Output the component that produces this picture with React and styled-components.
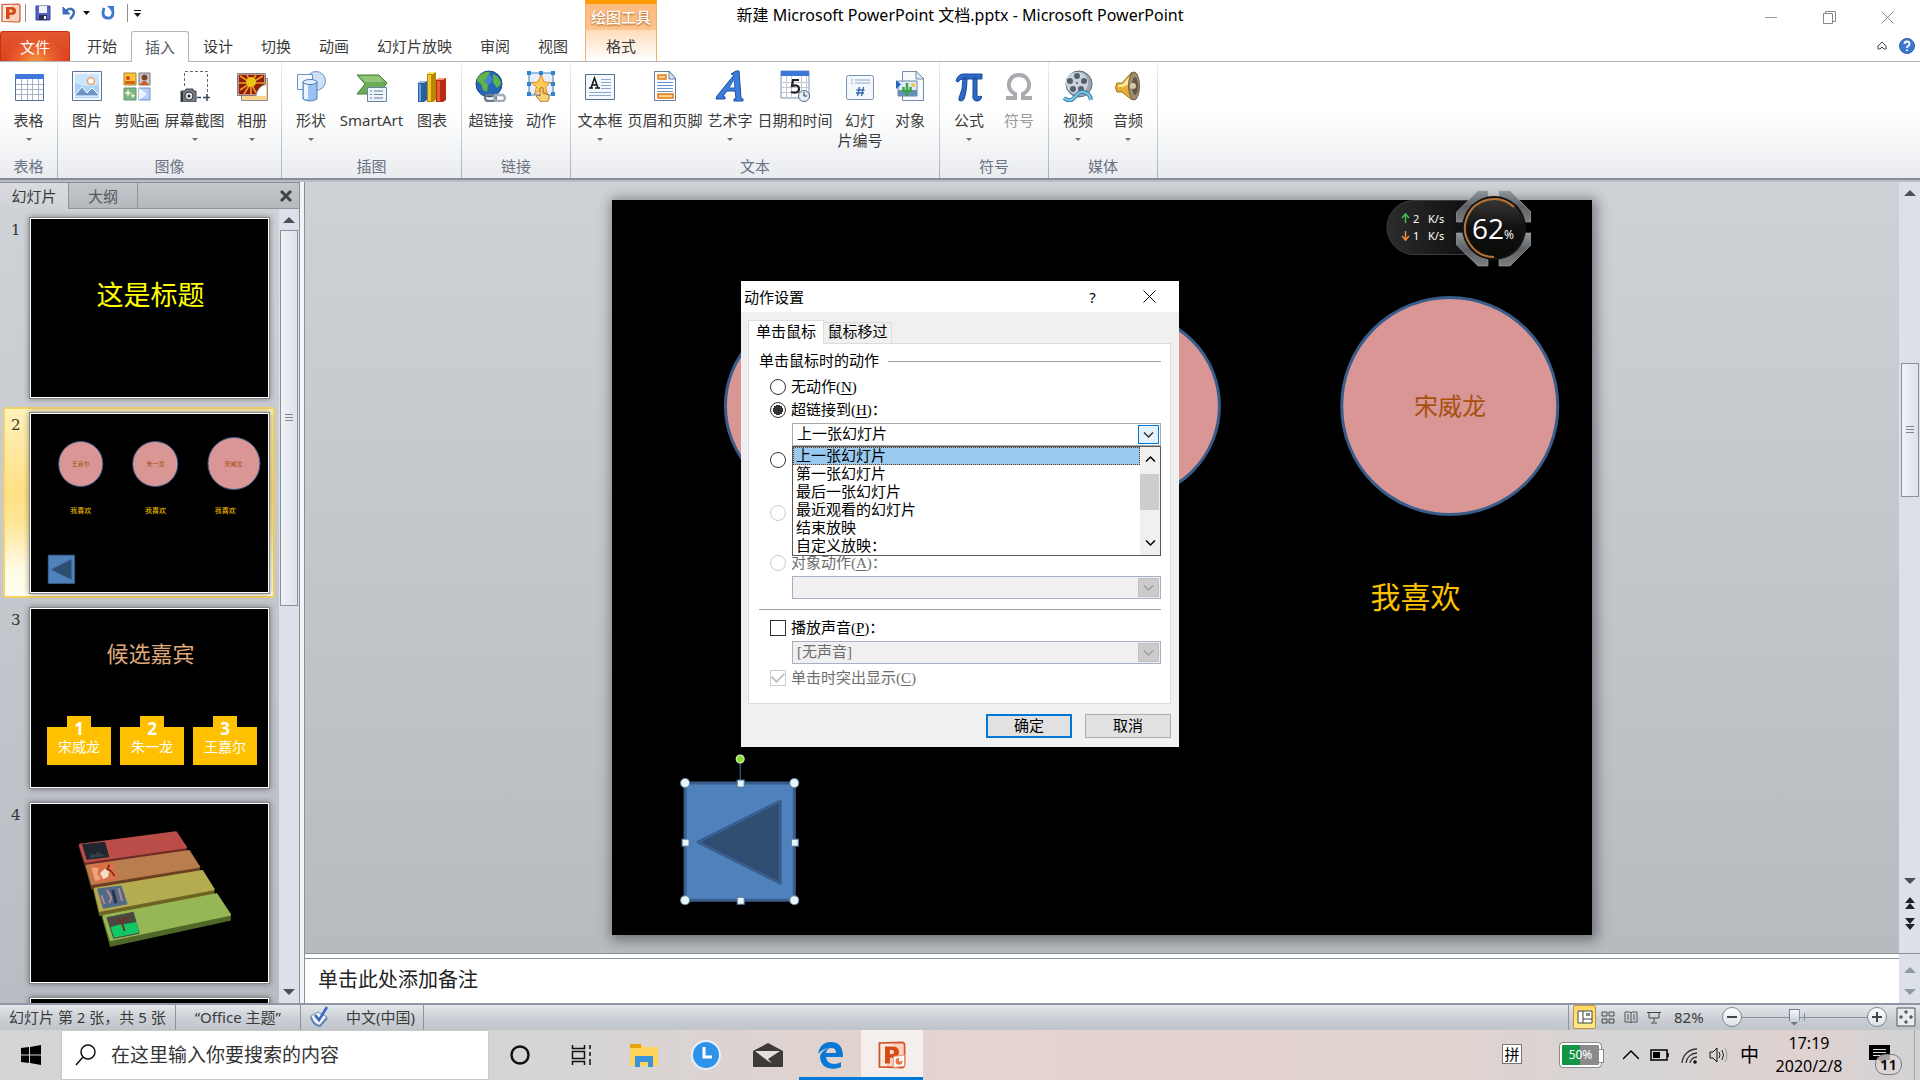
import React from 'react'
import styled, { createGlobalStyle, css } from 'styled-components'

const uiFont = '"Noto Sans", "Noto Sans CJK SC", sans-serif'
const songFont = '"Liberation Serif", "Noto Sans CJK SC", serif'

const GlobalStyle = createGlobalStyle`
  * { box-sizing: border-box; }
  body {
    margin: 0;
    overflow: hidden;
    background: #fff;
    color: #3b3b3b;
    font: 15px/20px ${uiFont};
  }
  button, input, select {
    margin: 0;
    padding: 0;
    border: 0;
    background: none;
    color: inherit;
    font: inherit;
  }
  svg { display: block; flex: none; }
`

const Window = styled.div`
  display: flex;
  flex-direction: column;
  height: 100vh;
`

/* ---------- title bar ---------- */

const TitleBar = styled.header`
  display: grid;
  grid-template-columns: 1fr auto 1fr;
  height: 31px;
  flex: none;
`
const QuickAccess = styled.div`
  display: flex;
  align-items: center;
  height: 26px;
  padding-left: 1px;
  button { display: flex; }
`
const QuickSep = styled.span`
  width: 1px;
  height: 18px;
  background: #8f8f8f;
  margin: 0 ${p => p.$gap}px 0 4px;
`
const DocTitle = styled.h1`
  margin: 0;
  padding-top: 5px;
  font-size: 16px;
  line-height: 20px;
  font-weight: 400;
  color: #000;
`
const WindowButtons = styled.div`
  display: flex;
  justify-content: flex-end;
  padding-right: 4px;
  button {
    width: 58px;
    height: 34px;
    display: grid;
    place-items: center;
  }
`

/* ---------- ribbon ---------- */

const TabRow = styled.nav`
  display: flex;
  align-items: flex-end;
  height: 31px;
  flex: none;
  border-bottom: 1px solid #b2b5ba;
`
const FileTab = styled.button`
  width: 70px;
  height: 30px;
  margin-right: 3px;
  border: 1px solid #c5330f;
  border-bottom: 0;
  border-radius: 3px 3px 0 0;
  background: radial-gradient(ellipse at 50% 120%, #fbab45 0, rgba(240, 110, 50, 0.8) 35%, transparent 65%), linear-gradient(#e2572f, #dc4220);
  color: #fff;
`
const Tab = styled.button`
  height: 30px;
  padding: 0 14px;
  ${p => p.$active && css`
    height: 31px;
    margin-bottom: -1px;
    padding: 0 13px;
    border: 1px solid #b2b5ba;
    border-bottom: 0;
    border-radius: 3px 3px 0 0;
    background: #fff;
    color: #505b68;
  `}
`
const ContextTab = styled.div`
  display: flex;
  flex-direction: column;
  width: 72px;
  height: 61px;
  margin-left: 3px;
  border-top: 4px solid #ff9c00;
  border-left: 1px solid #f0b070;
  border-right: 1px solid #f0b070;
  background: linear-gradient(#fdba7c 0, #fdc48e 26px, #fedcb9 26px, #fff 56px);
  text-align: center;
  span {
    padding-top: 3px;
    height: 26px;
    color: #fff;
    font-weight: 500;
    text-shadow: 0 1px 2px #a85a18;
  }
  button { height: 31px; }
`
const TabRowEnd = styled.div`
  display: flex;
  align-items: center;
  gap: 12px;
  height: 30px;
  margin-left: auto;
  padding-right: 5px;
  button { display: flex; }
`
const Ribbon = styled.div`
  display: flex;
  flex: none;
  height: 118px;
  border-bottom: 2px solid #868c95;
  background: linear-gradient(#fff 0, #fff 44%, #f7f8f9 65%, #e9ebef 100%);
`
const Group = styled.section`
  display: flex;
  flex-direction: column;
  padding: 8px 4px 0;
  border-right: 1px solid;
  border-image: linear-gradient(#eceef0, #aeb2b8) 1;
`
const GroupItems = styled.div`
  display: flex;
  height: 86px;
`
const GroupLabel = styled.h2`
  margin: 0;
  text-align: center;
  font-size: 15px;
  line-height: 20px;
  font-weight: 400;
  color: #6a7283;
`
const BigButton = styled.button`
  display: flex;
  flex-direction: column;
  align-items: center;
  width: ${p => p.$w || 50}px;
  color: ${p => (p.disabled ? '#9a9a9a' : '#3b3b3b')};
  line-height: 20px;
  svg { margin-bottom: 8px; }
  span { white-space: nowrap; }
`
const Caret = styled.i`
  margin-top: 8px;
  border: 3px solid transparent;
  border-top-color: #707070;
  border-bottom: 0;
`

/* ---------- workspace ---------- */

const Workspace = styled.main`
  display: flex;
  flex: 1;
  min-height: 0;
  border-top: 2px solid #b9bdc4;
`
const SidePane = styled.aside`
  display: flex;
  flex-direction: column;
  width: 300px;
  flex: none;
  background: linear-gradient(#cfd2d7, #b9bcc2);
  border-right: 1px solid #8a9099;
`
const PaneTabs = styled.div`
  display: flex;
  height: 27px;
  flex: none;
  border-top: 1px solid #8a9099;
  border-bottom: 1px solid #8f959c;
  background: linear-gradient(#c3c7cb, #b5b9bd);
  button:last-child {
    display: grid;
    place-items: center;
    width: 26px;
    margin-left: auto;
  }
`
const PaneTab = styled.button`
  width: 69px;
  border-right: 1px solid #8f959c;
  color: ${p => (p.$active ? '#3b3b3b' : '#55585c')};
  ${p => p.$active && css`
    height: 26px;
    background: linear-gradient(#d9dbdf, #cfd2d7);
  `}
`
const PaneBody = styled.div`
  display: flex;
  flex: 1;
  min-height: 0;
`
const ThumbList = styled.ol`
  flex: 1;
  margin: 0;
  padding: 3px 4px 0 3px;
  list-style: none;
  overflow: hidden;
`
const ThumbItem = styled.li`
  display: flex;
  height: 191px;
  margin-bottom: 4px;
  padding: 5px 0 0 7px;
  border: 1px solid transparent;
  border-radius: 3px;
  font: 15px/20px "DejaVu Serif", serif;
  color: #333;
  > span { width: 11px; padding-top: 2px; }
  ${p => p.$selected && css`
    border: 2px solid #f4d264;
    padding: 4px 0 0 6px;
    background: linear-gradient(#fff1bb, #ffe085 45%, #ffe596 60%, #fffbe3 85%, #fffdf0);
  `}
`
const ThumbFrame = styled.div`
  position: relative;
  width: 239px;
  height: 180px;
  margin-left: 8px;
  border: 1px solid #fff;
  outline: 1px solid #85888d;
  background: #000;
  box-shadow: 0 0 6px 1px rgba(0, 0, 0, 0.4);
  overflow: hidden;
`
const ScrollTrack = styled.div`
  display: flex;
  flex-direction: column;
  align-items: center;
  width: ${p => p.$w || 20}px;
  flex: none;
  padding: ${p => p.$pad || '8px 0'};
  background: #dce0e9;
`
const Arrow = styled.i`
  flex: none;
  border: 6px solid transparent;
  ${p => (p.$down
    ? css`border-top-color: ${p.$tone || '#4c4f54'}; border-bottom: 0;`
    : css`border-bottom-color: ${p.$tone || '#4c4f54'}; border-top: 0;`)}
`
const ScrollGap = styled.div`
  flex: 1;
`
const ScrollThumb = styled.div`
  display: grid;
  place-items: center;
  width: 18px;
  height: ${p => p.$h};
  margin-top: ${p => p.$top};
  margin-bottom: auto;
  border: 1px solid #8a919c;
  background: linear-gradient(90deg, #f0f2f6, #dde1e9);
  &::after {
    content: '';
    width: 8px;
    height: 8px;
    background: repeating-linear-gradient(#7f8590 0 1px, transparent 1px 3px);
  }
`
const Splitter = styled.div`
  width: 5px;
  flex: none;
  background: #f3f4f6;
  border-right: 1px solid #8a9099;
`
const Stage = styled.div`
  display: flex;
  flex-direction: column;
  flex: 1;
  min-width: 0;
`
const EditArea = styled.div`
  display: flex;
  flex: 1;
  min-height: 0;
`
const Canvas = styled.div`
  flex: 1;
  display: flex;
  justify-content: center;
  padding: 18px 0;
  background: linear-gradient(#ced1d6, #b7bbc0);
`
const Slide = styled.div`
  position: relative;
  height: 100%;
  aspect-ratio: 4 / 3;
  background: #000;
  box-shadow: 2px 2px 12px 3px rgba(0, 0, 0, 0.4);
`
const NotesRow = styled.div`
  display: flex;
  height: 50px;
  flex: none;
  border-top: 1px solid #8a9099;
  background: #fff;
`
const Notes = styled.p`
  flex: 1;
  margin: 4px 0 0;
  padding: 9px 13px;
  border-top: 1px solid #8a9099;
  color: #222;
  font: 20px/24px ${songFont};
`

/* ---------- slide contents ---------- */

const Person = styled.div`
  position: absolute;
  left: ${p => p.$x}%;
  top: 28%;
  width: ${p => p.$w}%;
  aspect-ratio: 1;
  transform: translate(-50%, 0);
  margin-top: ${p => -p.$w / 2}%;
  display: grid;
  place-items: center;
  border: ${p => (p.$small ? 1 : 3)}px solid #385d8a;
  border-radius: 50%;
  background: #d99694;
  color: #a5500f;
  font: ${p => (p.$small ? 6 : 24)}px/1 ${uiFont};
`
const Liking = styled.div`
  position: absolute;
  left: ${p => p.$x}%;
  top: 54%;
  transform: translate(-50%, -50%);
  color: #ffc000;
  font: ${p => (p.$small ? 7 : 30)}px/1 ${uiFont};
  white-space: nowrap;
`
const BackShape = styled.svg`
  position: absolute;
  left: 6.5%;
  top: 77.6%;
  width: 13%;
  height: 19.5%;
  overflow: visible;
`
const ThumbHeading = styled.div`
  position: absolute;
  left: 2px;
  right: 0;
  top: ${p => p.$top}px;
  text-align: center;
  color: ${p => p.$tone};
  font: ${p => p.$size}px/30px ${uiFont};
`
const Nominee = styled.div`
  position: absolute;
  top: 107px;
  left: ${p => p.$x}px;
  width: 64px;
  height: 49px;
  background: linear-gradient(#ffc000, #ffc000) 50% 0 / 24px 11px no-repeat, linear-gradient(#ffc000, #ffc000) 0 11px / 64px 38px no-repeat;
  text-align: center;
  color: #fff;
  b { display: block; padding-top: 4px; font: 700 17px/18px "Open Sans", sans-serif; }
  span { display: block; font: 14px/18px ${uiFont}; }
`

/* ---------- network gadget ---------- */

const Gadget = styled.div`
  position: absolute;
  right: 389px;
  top: 190px;
  width: 145px;
  height: 77px;
  color: #fff;
`
const Rates = styled.div`
  position: absolute;
  left: 14px;
  top: 20px;
  display: grid;
  grid-template-columns: 13px 15px 20px;
  align-items: center;
  font: 11px/17px ${uiFont};
  white-space: nowrap;
`
const Percent = styled.div`
  position: absolute;
  left: 86px;
  top: 22px;
  font: 28px/32px "Open Sans", sans-serif;
  small { font-size: 12px; }
`

/* ---------- dialog ---------- */

const Dialog = styled.form`
  position: absolute;
  left: calc(50% - 219px);
  top: 281px;
  width: 438px;
  background: #f0f0f0;
  color: #000;
  font: 15px/18px ${songFont};
`
const DialogTitle = styled.div`
  display: flex;
  align-items: center;
  height: 31px;
  padding-left: 3px;
  background: #fff;
  font-family: ${uiFont};
  b { flex: 1; font-weight: 400; }
  button { width: 57px; display: grid; place-items: center; }
  button:last-child { margin-right: 1px; }
`
const DialogTabs = styled.div`
  display: flex;
  align-items: flex-end;
  height: 31px;
  padding: 0 7px;
`
const DialogTab = styled.button`
  position: relative;
  z-index: 1;
  height: ${p => (p.$active ? 24 : 21)}px;
  width: ${p => (p.$active ? 76 : 68)}px;
  margin-bottom: ${p => (p.$active ? -1 : 0)}px;
  padding-bottom: 2px;
  border: 1px solid #dcdcdc;
  border-bottom: 0;
  border-left-width: ${p => (p.$active ? 1 : 0)}px;
  background: ${p => (p.$active ? '#fff' : '#f0f0f0')};
`
const DialogPanel = styled.div`
  margin: 0 8px 0 7px;
  height: 361px;
  padding: 8px 9px 0 10px;
  border: 1px solid #dcdcdc;
  background: #fff;
`
const Legend = styled.div`
  display: flex;
  align-items: center;
  gap: 9px;
  height: 18px;
  margin-bottom: 5px;
  &::after { content: ''; flex: 1; height: 1px; background: #a0a0a0; }
`
const Option = styled.label`
  display: flex;
  align-items: center;
  gap: 5px;
  height: 23px;
  padding-left: 11px;
  color: ${p => (p.$off ? '#6d6d6d' : '#000')};
  u { text-underline-offset: 2px; }
`
const Radio = styled.input.attrs({ type: 'radio' })`
  appearance: none;
  width: 16px;
  height: 16px;
  border: 1px solid #333;
  border-radius: 50%;
  background: #fff;
  &:checked { background: radial-gradient(circle, #333 0 5px, #fff 5px); }
  &:disabled { border-color: #ccc; }
`
const Check = styled.input.attrs({ type: 'checkbox' })`
  appearance: none;
  display: grid;
  place-items: center;
  width: 16px;
  height: 16px;
  border: 1px solid #333;
  background: #fff;
  &:disabled { border-color: #ccc; }
  &:checked::after {
    content: '';
    width: 10px;
    height: 6px;
    margin-top: -3px;
    border: solid #c2c2c2;
    border-width: 0 0 2px 2px;
    rotate: -45deg;
  }
`
const Combo = styled.div`
  position: relative;
  display: flex;
  height: 23px;
  margin: 2px 0 ${p => p.$after || 2}px 33px;
  padding: 1px;
  border: 1px solid ${p => (p.$off ? '#a3b1c2' : '#a9a9a9')};
  background: ${p => (p.$off ? '#f0f0f0' : '#fff')};
  color: ${p => (p.$off ? '#6d6d6d' : '#000')};
  select {
    appearance: none;
    flex: 1;
    padding: 0 3px 1px;
    opacity: 1;
    outline: 0;
  }
  > span {
    display: grid;
    place-items: center;
    width: 21px;
    border: 1px solid ${p => (p.$off ? '#bfbfbf' : '#0078d7')};
    background: ${p => (p.$off ? '#ccc' : '#e5f1fb')};
    color: ${p => (p.$off ? '#9f9f9f' : '#333')};
  }
`
const DropList = styled.div`
  position: absolute;
  z-index: 2;
  left: -1px;
  right: -1px;
  top: 22px;
  display: flex;
  height: 110px;
  border: 1px solid #5a5a5a;
  background: #fff;
  ul { flex: 1; margin: 0; padding: 0; list-style: none; }
`
const DropItem = styled.li`
  height: 18px;
  padding-left: 3px;
  line-height: 18px;
  ${p => p.$selected && css`
    background: #99c9ef;
    outline: 1px dotted #6b3610;
    outline-offset: -1px;
  `}
`
const DropScroll = styled.div`
  display: flex;
  flex-direction: column;
  align-items: center;
  justify-content: space-between;
  width: 20px;
  padding: 8px 0;
  background: linear-gradient(#cdcdcd, #cdcdcd) 0 27px / 19px 36px no-repeat, #f0f0f0;
`
const Rule = styled.hr`
  height: 1px;
  margin: 10px 0 6px;
  border: 0;
  background: #a0a0a0;
`
const DialogFooter = styled.div`
  display: flex;
  justify-content: flex-end;
  gap: 13px;
  padding: 10px 8px 9px;
  button {
    width: 86px;
    height: 24px;
    border: 1px solid #adadad;
    background: #e1e1e1;
  }
  button:first-child { border: 2px solid #0078d7; }
`

/* ---------- status bar ---------- */

const StatusBar = styled.footer`
  display: flex;
  align-items: center;
  height: 27px;
  flex: none;
  border-top: 2px solid #8f97a5;
  background: linear-gradient(#e3e6ea, #cdd1d7 50%, #bfc4ca);
`
const StatusItem = styled.span`
  display: flex;
  align-items: center;
  gap: ${p => p.$gap || 0}px;
  height: 25px;
  padding: 0 ${p => p.$px}px 2px;
  border-right: 1px solid #8e949c;
  white-space: nowrap;
`
const ViewTools = styled.div`
  display: flex;
  align-items: center;
  margin-left: auto;
  padding: 0 3px 1px 4px;
  border-left: 1px solid #8e949c;
`
const ViewButton = styled.button`
  display: grid;
  place-items: center;
  width: 23px;
  height: 24px;
  ${p => p.$active && css`
    border: 1px solid #c2923a;
    border-radius: 2px;
    background: linear-gradient(#ffd965, #ffe98f);
  `}
`
const FitButton = styled(ViewButton)`
  margin-left: 7px;
`
const Zoom = styled.div`
  display: flex;
  align-items: center;
  margin-left: 9px;
  label { width: 48px; }
  input {
    appearance: none;
    width: 125px;
    height: 20px;
    background: linear-gradient(#8691a0, #8691a0) 0 50% / 100% 1px no-repeat, linear-gradient(#8691a0, #8691a0) 50% 50% / 1px 8px no-repeat;
  }
  input::-webkit-slider-thumb {
    appearance: none;
    width: 11px;
    height: 17px;
    clip-path: polygon(0 0, 100% 0, 100% 70%, 50% 100%, 0 70%);
    background: linear-gradient(#f6f7f9, #c8ced6) 1px 1px / 9px 12px no-repeat #727d8c;
  }
`
const RoundButton = styled.button`
  display: grid;
  place-items: center;
  width: 20px;
  height: 20px;
  border: 1px solid #7d8694;
  border-radius: 50%;
  background: linear-gradient(#fff, #dce0e6);
`

/* ---------- taskbar ---------- */

const Taskbar = styled.div`
  display: flex;
  flex: none;
  height: 50px;
  background: linear-gradient(90deg, #d3d4d6 0, #d6d5d5 30%, #e0d3cf 43%, #e5d4d1 50%, #e1d3d0 75%, #d5d5d5 85%, #dfd2d0 94%, #d2d2d4 100%);
  color: #000;
`
const TaskButton = styled.button`
  display: grid;
  place-items: center;
  width: ${p => p.$w || 62}px;
  padding-top: 3px;
  border-bottom: 3px solid ${p => (p.$open ? '#0078d7' : 'transparent')};
  background: ${p => (p.$front ? '#f4eeec' : 'none')};
`
const SearchBox = styled.label`
  display: flex;
  align-items: center;
  width: 428px;
  padding-left: 13px;
  gap: 14px;
  border: 1px solid #c9c9c9;
  background: #fff;
  input { flex: 1; min-width: 0; font-size: 19px; outline: 0; }
  input::placeholder { color: #333; opacity: 1; }
`
const Tray = styled.div`
  display: flex;
  align-items: center;
  margin-left: auto;
  padding-right: 5px;
`
const Pinyin = styled.span`
  display: grid;
  place-items: center;
  width: 20px;
  height: 20px;
  margin: 0 38px 3px 0;
  border: 1px solid #777;
  background: #fff;
  font-size: 15px;
  line-height: 18px;
`
const Battery = styled.span`
  position: relative;
  width: 41px;
  height: 24px;
  margin-right: 22px;
  border: 2px solid #fff;
  outline: 1px solid #8b8b8b;
  border-radius: 3px;
  background: linear-gradient(90deg, #149544 50%, #8b8b8b 50%);
  color: #fff;
  text-align: center;
  font-size: 12px;
  line-height: 19px;
  &::after {
    content: '';
    position: absolute;
    right: -5px;
    top: 4px;
    width: 4px;
    height: 12px;
    border: 1px solid #8b8b8b;
    border-left: 0;
    background: #fff;
  }
`
const TrayIcons = styled.div`
  display: flex;
  align-items: center;
  gap: 11px;
  span { font-size: 19px; line-height: 24px; }
`
const Clock = styled.time`
  width: 76px;
  margin: 0 22px 0 12px;
  text-align: center;
  font-size: 16px;
  line-height: 23px;
  white-space: nowrap;
`
const ActionCenter = styled.button`
  position: relative;
  display: flex;
  width: 46px;
  height: 50px;
  padding-top: 15px;
  border-right: 1px solid #a9a9a9;
  span {
    position: absolute;
    left: 6px;
    top: 24px;
    width: 27px;
    height: 21px;
    border: 1px solid #777;
    border-radius: 10px;
    background: rgba(220, 215, 214, 0.75);
    font-weight: 600;
    line-height: 19px;
  }
`

/* ---------- icons ---------- */

const Icon = ({ size = 32, w, children }) => (
  <svg width={w || size} height={size} viewBox={`0 0 ${w || size} ${size}`} fill="none" aria-hidden="true">
    {children}
  </svg>
)

const icons = {
  table: (
    <Icon>
      <path d="M2.500 4.500h28v26h-28z" fill="#fff" stroke="#54719e" />
      <path d="M2 4h29v5H2z" fill="#3f78dc" />
      <path d="M3 14.500h27M3 19.500h27M3 24.500h27M8.500 9v21M14.500 9v21M19.500 9v21M25.500 9v21" stroke="#a3b2c8" />
    </Icon>
  ),
  picture: (
    <Icon>
      <path d="M1.500 1.500h29v29h-29z" fill="#f4f8fd" stroke="#5a7696" />
      <path d="M4 4h24v24H4z" fill="#a8d3f6" />
      <path d="M4 4h24v10Q14 20 4 12z" fill="#cbe6fb" />
      <circle cx="20" cy="11" r="3.500" fill="#fff" stroke="#efa26b" strokeWidth="1.500" />
      <path d="M4 25l7-8 5 6 5-5 7 7v1H4z" fill="#6d93c2" stroke="#fff" />
    </Icon>
  ),
  clipart: (
    <Icon>
      <path d="M3 3h12v12H3z" fill="#fbc53a" stroke="#a8832d" /><path d="M4 11h10v3H4z" fill="#d8602a" /><circle cx="7" cy="8" r="2" fill="#e33d16" />
      <path d="M18 3h11v12H18z" fill="#c6cad0" stroke="#777" /><circle cx="23.500" cy="7.500" r="3" fill="#7d4629" /><path d="M19 15q4-8 9 0z" fill="#d25c1e" />
      <path d="M3 18h12v12H3z" fill="#7db58b" stroke="#5f9770" /><path d="M7 19l1 3 3 1-3 1-1 3-1-3-3-1 3-1zM12 23l.8 2 2 .8-2 .8-.8 2-.8-2-2-.8 2-.8z" fill="#fffac0" />
      <path d="M18 18h11v12H18z" fill="#b5cdf8" stroke="#768fc0" /><path d="M18 18l8 6-8 6z" fill="#eef4ff" />
    </Icon>
  ),
  screenshot: (
    <Icon>
      <path d="M5.500 16V1.500h23V25" stroke="#666" strokeDasharray="3 2" /><path d="M18 27.500h4M24 27.500h7M28 24v7" stroke="#374766" strokeWidth="1.500" />
      <path d="M2 21h4l1-2h7v2h3v11H2z" fill="#777d87" stroke="#3d424b" /><path d="M2 22h2v9H2z" fill="#333" /><circle cx="10" cy="26" r="4" fill="#e4ebf2" stroke="#333" /><circle cx="10" cy="26" r="1.500" fill="#222" />
    </Icon>
  ),
  album: (
    <Icon>
      <path d="M5.500 8.500h26v22h-26z" fill="#f9d58c" stroke="#8b8b95" /><path d="M2 4h27v21H2z" fill="#8d1c0c" stroke="#fff" /><path d="M1.500 3.500h28v22h-28z" stroke="#66605f" strokeWidth=".8" />
      <path d="M15 13L4 6M15 13L11 5M15 13L20 5M15 13L27 6M15 13L3 13M15 13L4 20M15 13L8 24M15 13l0 11M15 13l5 10M15 13l13 0" stroke="#f39b21" strokeWidth="1.600" />
      <circle cx="15" cy="12" r="5" fill="#e8c512" /><path d="M30 15q-9 1-10 11h10z" fill="#fff" /><path d="M30 14q-8 2-10 12" stroke="#999" />
    </Icon>
  ),
  shapes: (
    <Icon>
      <circle cx="21" cy="11" r="9.500" fill="#cfe0f6" stroke="#6a93c9" /><path d="M2.500 4.500h15v15h-15z" fill="#f5f9fe" stroke="#6a93c9" />
      <path d="M8 12v17q7 4 14 0V12z" fill="#9cc1f1" stroke="#4b7cbd" /><path d="M11 13v16" stroke="#eaf3ff" strokeWidth="4" /><ellipse cx="15" cy="12" rx="7" ry="2.500" fill="#e5f0fd" stroke="#4b7cbd" />
    </Icon>
  ),
  smartart: (
    <Icon>
      <path d="M1 5h22l8 8-8 11H1l8-10z" fill="#6dab55" stroke="#4b8038" /><path d="M3 6h20l5 6H9z" fill="#91c67a" />
      <path d="M11.500 17.500h19v14h-19z" fill="#eef4fb" stroke="#69829e" /><path d="M14 21h2M14 24.500h2M14 28h2M18 21h9M18 24.500h9M18 28h9" stroke="#667f9a" />
    </Icon>
  ),
  chart: (
    <Icon>
      <path d="M2 13l3-2h6v19l-3 2H2z" fill="#28609f" /><path d="M2 13l3-2h6l-3 2z" fill="#8fbce9" /><path d="M3 14h2v17H3z" fill="#6ba2db" />
      <path d="M11 4l3-2h6v28l-3 2h-6z" fill="#b78700" /><path d="M11 4l3-2h6l-3 2z" fill="#ffe66d" /><path d="M12 5h3v26h-3z" fill="#f1c92b" />
      <path d="M20 10l3-2h7v22l-3 2h-7z" fill="#b52c12" /><path d="M20 10l3-2h7l-3 2z" fill="#ff9b78" /><path d="M21 11h3v20h-3z" fill="#e8593a" />
    </Icon>
  ),
  link: (
    <Icon>
      <circle cx="14" cy="14" r="13" fill="#2667b5" stroke="#174985" /><circle cx="11" cy="9" r="6" fill="#5fa5ea" opacity=".5" />
      <path d="M5 5q6-4 10-3l-3 5-3 4 4 4-1 7-4-2-2-6-4-3q0-4 3-6zM18 4q7 3 8 10l-4 4-4-6z" fill="#63b447" />
      <rect x="10" y="25" width="11" height="6" rx="3" stroke="#6c7787" strokeWidth="2.400" /><rect x="19" y="25" width="11" height="6" rx="3" stroke="#a0abbb" strokeWidth="2.400" />
    </Icon>
  ),
  action: (
    <Icon>
      <path d="M4 3h24v22H4z" fill="#e9f0fb" stroke="#3b7bbd" /><path d="M16 4.500l3 7.500 7 .5-5.500 4.500 2 7-6.500-4-6.500 4 2-7L6 12.500l7-.5z" fill="#ffcb57" stroke="#df8a2b" />
      <path d="M2 1h4v4H2zM14 1h4v4h-4zM26 1h4v4h-4zM2 12h4v4H2zM26 12h4v4h-4zM2 22h4v4H2zM26 22h4v4h-4z" fill="#2f84cf" />
      <path d="M15 18q1.500-1 3 0v5l6 2v4l-2 3h-6l-5-6q1-2 4 0z" fill="#f8d27b" stroke="#a87118" />
    </Icon>
  ),
  textbox: (
    <Icon>
      <path d="M1.500 4.500h29v25h-29z" fill="#f5f8fc" stroke="#546e8e" /><path d="M17 9.500h10M17 12.500h10M17 15.500h10M17 18.500h10M5 22.500h22M5 25.500h22" stroke="#8ba9cf" />
      <path d="M5 18h4M11 18h5M7 18L10.500 8 14 18M8 15h5" stroke="#111" strokeWidth="1.500" />
    </Icon>
  ),
  header: (
    <Icon>
      <path d="M5.500 1.500h15l6 7v22h-21z" fill="#fff" stroke="#667e9b" /><path d="M20 1v8h7z" fill="#d9e5f2" stroke="#667e9b" />
      <path d="M9 5h8v4H9zM9 24h15v4H9z" fill="#ffd08a" stroke="#dc7c18" strokeWidth="1.500" /><path d="M8 12.500h16M8 15.500h16M8 18.500h16M8 21.500h16" stroke="#6d94ca" />
    </Icon>
  ),
  wordart: (
    <Icon>
      <path d="M3 26L20 5l-3-1 5-3h3l2 27 2 1v2h-9v-2l2-1-1-7h-8l-4 5 2 1v2H2z" fill="#3a7dda" stroke="#1e509c" /><path d="M15 18h6l-1-9z" fill="#fff" stroke="#2b63b4" />
    </Icon>
  ),
  date: (
    <Icon>
      <path d="M2 1h28v27H2z" fill="#fff" stroke="#7892b1" /><path d="M2 1h28v5H2z" fill="#3c78db" /><path d="M2 12.500h28M2 17.500h28M2 22.500h28M7.500 6v22M12.500 6v22M22.500 6v22M27.500 6v22" stroke="#c2c8d0" />
      <path d="M20 10h-6l-1 6q7-2 7 3t-8 3" stroke="#222" strokeWidth="2.200" /><circle cx="25" cy="26" r="5.500" fill="#e4eef9" stroke="#576b84" /><path d="M25 22v4h3" stroke="#27374b" />
    </Icon>
  ),
  number: (
    <Icon>
      <rect x="2.500" y="5.500" width="27" height="24" rx="2" fill="#f4f8fd" stroke="#7892b4" /><path d="M7 10h2M11 10h15M7 13h2M11 13h15" stroke="#8aa5cb" />
      <path d="M15.500 17l-2 9M19.500 17l-2 9M12.500 20h8M12 23h8" stroke="#3568ac" strokeWidth="1.300" />
    </Icon>
  ),
  object: (
    <Icon>
      <path d="M8.500 1.500h14l7 7v22h-21z" fill="#f7faff" stroke="#748ba6" /><path d="M22 1v8h8z" fill="#dde8f4" stroke="#748ba6" />
      <path d="M4 11h19v15H4z" fill="#dce9f8" stroke="#6f88a5" /><path d="M4 20h19v6H4z" fill="#688db7" /><path d="M13 13v13M9.500 17v4h7v-4" stroke="#3da043" strokeWidth="2.500" /><circle cx="19" cy="15" r="2" fill="#f5c342" /><path d="M2 10l5 4.500-5 4.500z" fill="#2764c5" />
    </Icon>
  ),
  formula: (
    <Icon>
      <path d="M3 11q2-7 7-7h19v5H11q-4 0-6 3zM10 8h4q0 13-3 21-1 2-3 2-3 0-2-3 4-8 4-20zM20 8h4v16q0 4 4 2l1 1q-2 5-6 4t-3-7z" fill="#2c68c8" stroke="#1b4c9d" />
    </Icon>
  ),
  symbol: (
    <Icon>
      <path d="M3 28h9v-4q-7-4-6-11Q8 5 16 5t10 8q1 7-6 11v4h9" stroke="#a8abb0" strokeWidth="4" />
    </Icon>
  ),
  video: (
    <Icon>
      <circle cx="17" cy="14" r="13" fill="#9ca7b1" stroke="#5d6975" /><circle cx="15" cy="13" r="11" fill="#ccd3da" />
      <g fill="#52616d"><circle cx="15" cy="6" r="3" /><circle cx="22" cy="11" r="3" /><circle cx="19" cy="19" r="3" /><circle cx="11" cy="19" r="3" /><circle cx="8" cy="11" r="3" /><circle cx="15" cy="13" r="1" /></g>
      <path d="M2 28q6 5 11-1t8-5q7 1 8 8" stroke="#337da5" strokeWidth="4" /><path d="M2 28q6 5 11-1t8-5q7 1 8 8" stroke="#7cc8e5" strokeWidth="2" />
    </Icon>
  ),
  audio: (
    <Icon>
      <path d="M5 13h5L20 2q5 13 0 28L10 22H5q-3-5 0-9z" fill="#e8ad35" stroke="#9b731e" /><path d="M6 15l5-1 8-9v8l-8 4H6z" fill="#ffe7a0" /><ellipse cx="22" cy="16" rx="5.500" ry="14" fill="#9f8b6d" stroke="#6e634f" /><ellipse cx="23" cy="16" rx="3" ry="9" fill="#60564a" /><circle cx="21" cy="16" r="3" fill="#d9caae" />
    </Icon>
  ),
}

const PptIcon = ({ size = 20 }) => (
  <svg width={size} height={size} viewBox="0 0 20 20" fill="none" aria-hidden="true">
    <path d="M1 1.500L17 1q2 0 2 2v14q0 2-2 2l-16-.5z" fill="#f9d3bf" stroke="#cf542c" strokeWidth="1.200" />
    <path d="M2 2h9l-5 16H2z" fill="#fff" opacity=".5" />
    <path d="M5 4h5.500q4.500 0 4.500 4t-4.500 4H8.500v4H5zm3.500 2.500v3h1.500q1.500 0 1.500-1.500T10 6.500z" fill="#d64b14" fillRule="evenodd" />
    {size > 20 && (
      <>
        <path d="M11 11l8-1v8l-8 1z" fill="#fff" stroke="#e8906c" strokeWidth=".7" />
        <circle cx="15" cy="14.500" r="2.500" fill="#e9744a" />
        <path d="M15 14.500V12a2.500 2.500 0 012.500 2.500z" fill="#fff" />
      </>
    )}
  </svg>
)

const Chevron = ({ up }) => (
  <svg width="11" height="8" viewBox="0 0 11 8" fill="none" aria-hidden="true">
    <path d={up ? 'M1 6.500l4.500-4.500L10 6.500' : 'M1 1.500L5.500 6 10 1.500'} stroke="currentColor" strokeWidth="1.500" />
  </svg>
)

/* ---------- pieces ---------- */

const ribbonGroups = [
  { name: '表格', items: [{ text: '表格', icon: 'table', caret: true, w: 49 }] },
  {
    name: '图像',
    items: [
      { text: '图片', icon: 'picture' },
      { text: '剪贴画', icon: 'clipart' },
      { text: '屏幕截图', icon: 'screenshot', caret: true, w: 65 },
      { text: '相册', icon: 'album', caret: true },
    ],
  },
  {
    name: '插图',
    items: [
      { text: '形状', icon: 'shapes', caret: true },
      { text: 'SmartArt', icon: 'smartart', w: 71 },
      { text: '图表', icon: 'chart' },
    ],
  },
  { name: '链接', items: [{ text: '超链接', icon: 'link' }, { text: '动作', icon: 'action' }] },
  {
    name: '文本',
    items: [
      { text: '文本框', icon: 'textbox', caret: true },
      { text: '页眉和页脚', icon: 'header', w: 80 },
      { text: '艺术字', icon: 'wordart', caret: true },
      { text: '日期和时间', icon: 'date', w: 80 },
      { text: '幻灯', second: '片编号', icon: 'number' },
      { text: '对象', icon: 'object' },
    ],
  },
  { name: '符号', items: [{ text: '公式', icon: 'formula', caret: true }, { text: '符号', icon: 'symbol', disabled: true }] },
  { name: '媒体', items: [{ text: '视频', icon: 'video', caret: true }, { text: '音频', icon: 'audio', caret: true }] },
]

const Handles = () => (
  <g>
    <path d="M64 0V-24" stroke="#4a6f9a" />
    <circle cx="64" cy="-24" r="4" fill="#8ae234" stroke="#e8f4d8" />
    {[[64, 0], [9, 59], [118, 59], [64, 117]].map(([x, y]) => (
      <rect key={`${x}-${y}`} x={x - 3} y={y - 3} width="7" height="7" fill="#e4f6fa" stroke="#55789c" />
    ))}
    {[[9, 0], [118, 0], [9, 117], [118, 117]].map(([x, y]) => (
      <circle key={`${x}-${y}`} cx={x} cy={y} r="4.500" fill="#e4f6fa" stroke="#6d8296" />
    ))}
  </g>
)

const guests = [
  { name: '王嘉尔', x: 21, w: 19.2, likeX: 21 },
  { name: '朱一龙', x: 52.5, w: 19.2, likeX: 52.5 },
  { name: '宋威龙', x: 85.5, w: 22.4, likeX: 82 },
]

// behind: guests whose captions the open dialog covers
const GuestSlide = ({ small, behind = [] }) => (
  <>
    {guests.map((g, i) => (
      <React.Fragment key={g.name}>
        <Person $x={g.x} $w={g.w} $small={small}>{!behind.includes(i) && g.name}</Person>
        {!behind.includes(i) && <Liking $x={g.likeX} $small={small}>我喜欢</Liking>}
      </React.Fragment>
    ))}
    <BackShape viewBox="0 -13 127 143">
      <path d="M9 0h109v117H9z" fill="#4f81bd" stroke="#385d8a" strokeWidth="3" />
      <path d="M22 59l82-41v82z" fill="#2f4d71" stroke="#385d8a" strokeWidth="3" strokeLinejoin="round" />
      {!small && <Handles />}
    </BackShape>
  </>
)

const bars = [
  { top: '240,764 528,727 558,772 256,815', side: '238,768 256,813 558,770 558,779 256,826', c: '#bb4d49', d: '#6f2a27', pic: '248,764 314,757 326,800 261,808', p: '#1d272d' },
  { top: '260,827 567,783 597,830 276,882', side: '258,830 276,880 597,828 597,842 276,896', c: '#b97d4e', d: '#6b3f20', pic: '269,827 337,818 351,868 287,878', p: '#d87048' },
  { top: '284,896 607,843 641,898 300,962', side: '282,900 300,960 641,896 641,911 300,976', c: '#b5ab51', d: '#6c6422', pic: '293,897 363,888 381,942 310,955', p: '#506b88' },
  { top: '310,978 650,913 690,974 332,1050', side: '308,982 332,1048 690,972 690,990 332,1068', c: '#97b757', d: '#4f6828', pic: '321,983 400,967 417,1030 341,1045', p: '#49483e' },
]

const BarsDrawing = () => (
  <svg width="100%" height="100%" viewBox="93 642 711 534" aria-hidden="true">
    {bars.map(b => (
      <g key={b.c}>
        <polygon points={b.side} fill={b.d} stroke={b.d} strokeWidth="5" strokeLinejoin="round" />
        <polygon points={b.top} fill={b.c} stroke={b.c} strokeWidth="6" strokeLinejoin="round" />
        <polygon points={b.pic} fill={b.p} stroke={b.p} strokeWidth="3" strokeLinejoin="round" />
      </g>
    ))}
    <path d="M268 804l6-14 10 6 10-12 10 8 12 4 4 2z" fill="#333f45" />
    <path d="M274 832l22 2-4 18 12 14-18 8z" fill="#f0a27c" />
    <path d="M300 850l14-14 14 6-4 18-14 8z" fill="#f6dcc2" />
    <path d="M328 824l-6 14 12 6 10 14" stroke="#8d2410" strokeWidth="5" fill="none" />
    <path d="M304 916l10 26M320 899l14 24-6 16M356 895l10 38" stroke="#bd8294" strokeWidth="6" fill="none" />
    <path d="M338 900l10 40" stroke="#29304e" strokeWidth="9" />
    <path d="M332 1012l24-8 20-2 34-6 6 32-74 15z" fill="#12c765" />
    <path d="M352 985l14 14 8 24M364 994l24-14" stroke="#6e2f22" strokeWidth="6" fill="none" />
  </svg>
)

const ActionDialog = () => (
  <Dialog>
    <DialogTitle>
      <b>动作设置</b>
      <button type="button" aria-label="帮助">?</button>
      <button type="button" aria-label="关闭">
        <Icon size={13}><path d="M.5.5l12 12M12.500.5l-12 12" stroke="#000" /></Icon>
      </button>
    </DialogTitle>
    <DialogTabs>
      <DialogTab type="button" $active>单击鼠标</DialogTab>
      <DialogTab type="button">鼠标移过</DialogTab>
    </DialogTabs>
    <DialogPanel>
      <Legend>单击鼠标时的动作</Legend>
      <Option><Radio name="act" /><span>无动作(<u>N</u>)</span></Option>
      <Option><Radio name="act" defaultChecked /><span>超链接到(<u>H</u>)：</span></Option>
      <Combo>
        <select aria-label="超链接到"><option>上一张幻灯片</option></select>
        <span><Chevron /></span>
        <DropList>
          <ul role="listbox" aria-label="超链接到">
            {['上一张幻灯片', '第一张幻灯片', '最后一张幻灯片', '最近观看的幻灯片', '结束放映', '自定义放映：'].map((t, i) => (
              <DropItem key={t} role="option" aria-selected={i === 0} $selected={i === 0}>{t}</DropItem>
            ))}
          </ul>
          <DropScroll><Chevron up /><Chevron /></DropScroll>
        </DropList>
      </Combo>
      <Option><Radio name="act" aria-label="运行程序" /></Option>
      <Combo $off $after={5} />
      <Option $off><Radio name="act" aria-label="运行宏" disabled /></Option>
      <Combo $off />
      <Option $off><Radio name="act" disabled /><span>对象动作(<u>A</u>)：</span></Option>
      <Combo $off>
        <select aria-label="对象动作" disabled />
        <span><Chevron /></span>
      </Combo>
      <Rule />
      <Option><Check /><span>播放声音(<u>P</u>)：</span></Option>
      <Combo $off>
        <select aria-label="播放声音" disabled><option>[无声音]</option></select>
        <span><Chevron /></span>
      </Combo>
      <Option $off><Check defaultChecked disabled /><span>单击时突出显示(<u>C</u>)</span></Option>
    </DialogPanel>
    <DialogFooter>
      <button type="button">确定</button>
      <button type="button">取消</button>
    </DialogFooter>
  </Dialog>
)

const NetGadget = () => (
  <Gadget>
    <Icon w={145} size={77}>
      <defs>
        <linearGradient id="pill"><stop stopColor="#2c2c2c" /><stop offset="1" stopColor="#0a0a0a" /></linearGradient>
        <linearGradient id="dial" x2="0" y2="1"><stop stopColor="#3a3835" /><stop offset=".5" stopColor="#111" /><stop offset="1" stopColor="#0a0a08" /></linearGradient>
        <linearGradient id="steel" x2="0" y2="1"><stop stopColor="#8f959b" /><stop offset=".5" stopColor="#5e6266" /><stop offset="1" stopColor="#7d7d7d" /></linearGradient>
      </defs>
      <path d="M28 10.500h70v54H28a27 27 0 010-54z" fill="url(#pill)" stroke="#3c3c3c" />
      <g fill="url(#steel)" stroke="#a5a8ab" strokeWidth=".6">
        <path d="M70.500 32V22L92 1h10v9L77 32z" />
        <path d="M145 32V22L124 1h-11v9l26 22z" />
        <path d="M70.500 43v12L92 76h10v-9L77 43z" />
        <path d="M145 43v12L124 76h-11v-9l26-24z" />
      </g>
      <circle cx="108" cy="38" r="32" fill="#141312" />
      <circle cx="108" cy="38" r="30" fill="url(#dial)" />
      <path d="M108 67A29 29 0 11128 17" stroke="#b5733a" strokeWidth="2" />
    </Icon>
    <Rates>
      <Icon size={13}><path d="M5.500 11V2M2 6l3.500-4L9 6" stroke="#3fbf50" strokeWidth="1.500" /></Icon><span>2</span><span>K/s</span>
      <Icon size={13}><path d="M5.500 2v9M2 7l3.500 4L9 7" stroke="#ee8a3c" strokeWidth="1.500" /></Icon><span>1</span><span>K/s</span>
    </Rates>
    <Percent>62<small>%</small></Percent>
  </Gadget>
)

const App = () => (
  <Window>
    <GlobalStyle />
    <TitleBar>
      <QuickAccess>
        <PptIcon />
        <QuickSep $gap={9} />
        <button aria-label="保存">
          <Icon size={16}><path d="M1 1h14v14H1z" fill="#5a62c4" stroke="#38409a" /><path d="M4 1h8v7H4z" fill="#eef3fb" /><path d="M4 10h8v5H4z" fill="#2a2f55" /><path d="M9 11h2v3H9z" fill="#fff" /></Icon>
        </button>
        <button aria-label="撤消">
          <Icon w={32} size={16}><path d="M12 2v7h7z" fill="#3e6db8" stroke="#3e6db8" /><path d="M15 6q4-4 7-1t-3 9" stroke="#3e6db8" strokeWidth="2.500" /></Icon>
        </button>
        <Icon w={10} size={16}><path d="M0 6h7l-3.500 4z" fill="#111" /></Icon>
        <button aria-label="恢复">
          <Icon w={30} size={16}><path d="M11 3q-3 9 3 10t6-6q0-2-2-3" stroke="#3b78cf" strokeWidth="2.800" /><path d="M14 1h7v7z" fill="#3b78cf" /></Icon>
        </button>
        <QuickSep $gap={5} />
        <Icon w={10} size={16}><path d="M1 5.500h7" stroke="#111" /><path d="M1 8h7l-3.500 4z" fill="#111" /></Icon>
      </QuickAccess>
      <DocTitle>新建 Microsoft PowerPoint 文档.pptx - Microsoft PowerPoint</DocTitle>
      <WindowButtons>
        <button aria-label="最小化"><Icon size={13}><path d="M0 6.500h12" stroke="#999" /></Icon></button>
        <button aria-label="还原"><Icon size={13}><path d="M.5 2.500h9v10h-9zM2.500 2.500v-2h10v10h-3" stroke="#888" /></Icon></button>
        <button aria-label="关闭"><Icon size={13}><path d="M.5.5l12 12M12.500.5l-12 12" stroke="#888" /></Icon></button>
      </WindowButtons>
    </TitleBar>

    <TabRow>
      <FileTab>文件</FileTab>
      {['开始', '插入', '设计', '切换', '动画', '幻灯片放映', '审阅', '视图'].map(t => (
        <Tab key={t} $active={t === '插入'}>{t}</Tab>
      ))}
      <ContextTab>
        <span>绘图工具</span>
        <button>格式</button>
      </ContextTab>
      <TabRowEnd>
        <button aria-label="功能区最小化"><Icon size={10}><path d="M1 5l4-4 4 4v3H7L5 6 3 8H1z" stroke="#444" /></Icon></button>
        <button aria-label="帮助">
          <Icon size={16}><circle cx="8" cy="8" r="7.500" fill="#3b78cf" stroke="#2a5ca8" /><path d="M5.500 6q0-2.500 2.500-2.500T10.500 6Q10.500 7.500 8 9v1M8 11.500v1.500" stroke="#fff" strokeWidth="1.800" /></Icon>
        </button>
      </TabRowEnd>
    </TabRow>

    <Ribbon>
      {ribbonGroups.map(g => (
        <Group key={g.name}>
          <GroupItems>
            {g.items.map(it => (
              <BigButton key={it.text} $w={it.w} disabled={it.disabled}>
                {icons[it.icon]}
                <span>{it.text}</span>
                {it.second && <span>{it.second}</span>}
                {it.caret && <Caret />}
              </BigButton>
            ))}
          </GroupItems>
          <GroupLabel>{g.name}</GroupLabel>
        </Group>
      ))}
    </Ribbon>

    <Workspace>
      <SidePane>
        <PaneTabs>
          <PaneTab $active>幻灯片</PaneTab>
          <PaneTab>大纲</PaneTab>
          <button aria-label="关闭窗格"><Icon size={12}><path d="M1 1l10 10M11 1L1 11" stroke="#3f4246" strokeWidth="3" /></Icon></button>
        </PaneTabs>
        <PaneBody>
          <ThumbList>
            <ThumbItem><span>1</span><ThumbFrame><ThumbHeading $top={61} $size={27} $tone="#ff0">这是标题</ThumbHeading></ThumbFrame></ThumbItem>
            <ThumbItem $selected><span>2</span><ThumbFrame><GuestSlide small /></ThumbFrame></ThumbItem>
            <ThumbItem>
              <span>3</span>
              <ThumbFrame>
                <ThumbHeading $top={29} $size={22} $tone="#dfa878">候选嘉宾</ThumbHeading>
                <Nominee $x={16}><b>1</b><span>宋威龙</span></Nominee>
                <Nominee $x={89}><b>2</b><span>朱一龙</span></Nominee>
                <Nominee $x={162}><b>3</b><span>王嘉尔</span></Nominee>
              </ThumbFrame>
            </ThumbItem>
            <ThumbItem><span>4</span><ThumbFrame><BarsDrawing /></ThumbFrame></ThumbItem>
            <ThumbItem><span /><ThumbFrame /></ThumbItem>
          </ThumbList>
          <ScrollTrack>
            <Arrow />
            <ScrollThumb $h="376px" $top="7px" />
            <Arrow $down />
          </ScrollTrack>
        </PaneBody>
      </SidePane>
      <Splitter />
      <Stage>
        <EditArea>
          <Canvas>
            <Slide><GuestSlide behind={[0, 1]} /></Slide>
          </Canvas>
          <ScrollTrack $w={21}>
            <Arrow />
            <ScrollThumb $h="134px" $top="167px" />
            <Arrow $down />
            <Icon w={12} size={61}><path d="M1 19l5-6 5 6zM1 25l5-6 5 6zM1 34h10l-5 6zM1 40h10l-5 6z" fill="#222" /></Icon>
          </ScrollTrack>
        </EditArea>
        <NotesRow>
          <Notes>单击此处添加备注</Notes>
          <ScrollTrack $w={21} $pad="13px 0 8px">
            <Arrow $tone="#8f9a9c" />
            <ScrollGap />
            <Arrow $down $tone="#8f9a9c" />
          </ScrollTrack>
        </NotesRow>
      </Stage>
    </Workspace>

    <StatusBar>
      <StatusItem $px={9}>幻灯片 第 2 张，共 5 张</StatusItem>
      <StatusItem $px={19}>“Office 主题”</StatusItem>
      <StatusItem $px={8} $gap={15}>
        <Icon size={22}><path d="M2 10l7-4 9 5-7 9q-8-2-9-10z" fill="#eef2f8" stroke="#7b8da8" /><path d="M2 11q2 8 9 9l7-8" stroke="#5d83b8" strokeWidth="2" /><path d="M6 9l4 5L18 1" stroke="#3567bd" strokeWidth="2.500" /></Icon>
        中文(中国)
      </StatusItem>
      <ViewTools>
        <ViewButton $active aria-label="普通视图"><Icon w={16} size={14}><path d="M1 1h14v12H1zM6 1v12M6 9h9" stroke="#444" fill="#fff" /><path d="M9 3h4v3H9z" fill="#888" /></Icon></ViewButton>
        <ViewButton aria-label="幻灯片浏览"><Icon w={14} size={13}><path d="M1 1h5v4H1zM8 1h5v4H8zM1 8h5v4H1zM8 8h5v4H8z" stroke="#444" /></Icon></ViewButton>
        <ViewButton aria-label="阅读视图"><Icon w={14} size={13}><path d="M1 1h5l1 1 1-1h5v10H8l-1 1-1-1H1zM7 2v10M3 4h2M3 6h2M3 8h2M9 4h2M9 6h2M9 8h2" stroke="#555" /></Icon></ViewButton>
        <ViewButton aria-label="幻灯片放映"><Icon w={14} size={13}><path d="M0 1.500h14M2 2v5h10V2M7 7v4M4 12h6" stroke="#444" /></Icon></ViewButton>
        <Zoom>
          <label htmlFor="zoom">82%</label>
          <RoundButton aria-label="缩小"><Icon size={10}><path d="M0 5h10" stroke="#444" strokeWidth="2" /></Icon></RoundButton>
          <input id="zoom" type="range" min="0" max="100" defaultValue="41" />
          <RoundButton aria-label="放大"><Icon size={10}><path d="M0 5h10M5 0v10" stroke="#444" strokeWidth="2" /></Icon></RoundButton>
        </Zoom>
        <FitButton aria-label="适应窗口"><Icon size={20}><path d="M1 1h18v18H1z" fill="#e7eaee" stroke="#555" /><path d="M10 3v4M8 5h4M10 13v4M8 15h4M3 10h4M5 8v4M13 10h4M15 8v4" stroke="#333" /></Icon></FitButton>
      </ViewTools>
    </StatusBar>

    <Taskbar>
      <TaskButton $w={61} aria-label="开始">
        <Icon size={20}><path d="M0 3l8-1v7.500H0zM9 2l11-2v9.500H9zM0 10.500h8V18l-8-1zM9 10.500h11V20L9 18z" fill="#000" /></Icon>
      </TaskButton>
      <SearchBox>
        <Icon w={22} size={22}><circle cx="13" cy="8" r="7" stroke="#111" strokeWidth="1.500" /><path d="M8 13l-7 8" stroke="#111" strokeWidth="1.500" /></Icon>
        <input type="text" placeholder="在这里输入你要搜索的内容" aria-label="搜索" />
      </SearchBox>
      <TaskButton aria-label="Cortana"><Icon size={22}><circle cx="11" cy="11" r="8.500" stroke="#111" strokeWidth="2.500" /></Icon></TaskButton>
      <TaskButton aria-label="任务视图"><Icon size={22}><path d="M1.500 1v3.500h12V1M1.500 21v-3.500h12V21M1.500 7.500h12v7h-12zM19 1v4M19 8v4M19 15v6" stroke="#111" strokeWidth="1.500" /></Icon></TaskButton>
      <TaskButton aria-label="文件资源管理器"><Icon w={28} size={26}><path d="M0 2h11l2 3h15v19H0z" fill="#ffd45c" /><path d="M0 2h11v4H0z" fill="#e5a50a" /><path d="M5 25V14h18v11h-5v-5h-8v5z" fill="#3a95dd" /></Icon></TaskButton>
      <TaskButton aria-label="L"><Icon size={30}><circle cx="15" cy="15" r="14" fill="#2d93ea" stroke="#e7f1f8" strokeWidth="2" /><path d="M13 7v10h8" stroke="#fff" strokeWidth="3" /></Icon></TaskButton>
      <TaskButton aria-label="邮件"><Icon w={30} size={26}><path d="M0 9L15 1l15 8v16H0z" fill="#3d3b3a" /><path d="M2 9h25L15 17l4 4-4-2z" fill="#e8dedb" /></Icon></TaskButton>
      <TaskButton $open aria-label="Edge">
        <Icon size={28}><path d="M2 13Q4 1 15 1q12 0 12 15H10q1 7 8 7 4 0 7-2v5q-3 1.800-9 1.800-11-1-12-11Q4 10 13 7 6 8 2 13zM10 12h10q0-5-4.500-5T10 12z" fill="#0a78d4" fillRule="evenodd" /></Icon>
      </TaskButton>
      <TaskButton $open $front aria-label="PowerPoint"><PptIcon size={28} /></TaskButton>
      <Tray>
        <Pinyin>拼</Pinyin>
        <Battery>50%</Battery>
        <TrayIcons>
          <Icon w={16} size={16}><path d="M0 12l8-8 8 8" stroke="#000" strokeWidth="1.500" /></Icon>
          <Icon w={20} size={12}><path d="M1 1h16v10H1zM18 4v4" stroke="#000" strokeWidth="1.500" /><path d="M3 3h7v6H3z" fill="#000" /></Icon>
          <Icon w={17} size={17}><path d="M1 16A15 15 0 0116 2M5 16A11 11 0 0116 6M9 16a7 7 0 017-6" stroke="#333" strokeWidth="1.300" /><circle cx="14" cy="15" r="1.800" fill="#111" /></Icon>
          <Icon w={20} size={16}><path d="M1 5h3l4-4v14l-4-4H1z" stroke="#111" /><path d="M10 5q2 3 0 6M13 3q3 5 0 10" stroke="#222" /><path d="M16 1q4 7 0 14" stroke="#999" /></Icon>
          <span>中</span>
        </TrayIcons>
        <Clock>17:19<br />2020/2/8</Clock>
        <ActionCenter aria-label="通知">
          <Icon w={21} size={20}><path d="M0 0h21v15h-6v5l-5-5H0z" fill="#000" /><path d="M4 4.500h13M4 7.500h13M4 10.500h8" stroke="#ddd" /></Icon>
          <span>11</span>
        </ActionCenter>
      </Tray>
    </Taskbar>

    <NetGadget />
    <ActionDialog />
  </Window>
)

export default App
